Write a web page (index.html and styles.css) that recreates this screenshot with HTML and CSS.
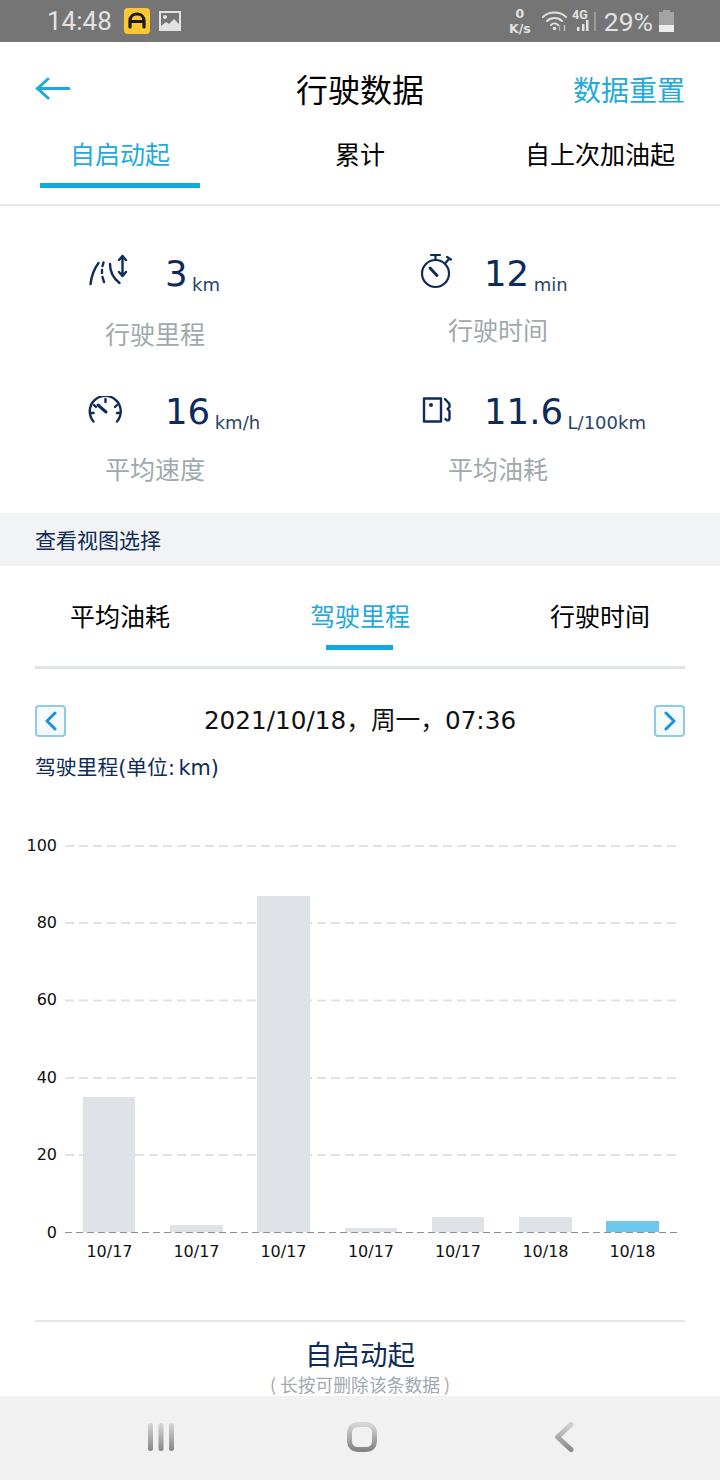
FILE: index.html
```html
<!DOCTYPE html>
<html lang="zh">
<head>
<meta charset="utf-8">
<title>行驶数据</title>
<link rel="stylesheet" href="styles.css">
</head>
<body>
<div class="page">
  <div class="statusbar">
    <div class="status-left">
      <span class="status-time">14:48</span>
      <svg class="app-icon" width="26" height="26" viewBox="0 0 26 26"><rect width="26" height="26" rx="4" fill="#fcc731"/><path d="M6 19V13C6 8.500 9 6 13 6s7 2.500 7 7v6" fill="none" stroke="#1c1a14" stroke-width="3.200" stroke-linecap="round"/><path d="M6 13.500h14" stroke="#1c1a14" stroke-width="3"/></svg>
      <svg class="pic-icon" width="22" height="20" viewBox="0 0 22 20"><path d="M0 0h22v20H0z" fill="#e2e2e2"/><path d="M2 2h18v11l-5-5-5 5-3-2-5 4z" fill="#757575"/><circle cx="6" cy="6" r="2" fill="#e2e2e2"/></svg>
    </div>
    <div class="status-right">
      <span class="speed"><span>0</span><span>K/s</span></span>
      <svg class="wifi" width="27" height="22" viewBox="0 0 27 22"><g fill="none" stroke="#e2e2e2" stroke-width="2" stroke-linecap="round"><path d="M1 7C7 1 18 1 24 7"/><path d="M5 11c4-4 11-4 15 0"/><path d="M9 15c2-2 5-2 7 0"/></g><circle cx="12.500" cy="18.500" r="1.800" fill="#e2e2e2"/><path d="M17.500 15v6" stroke="#a8a8a8" stroke-width="1.500"/><path d="M22.500 15v6" stroke="#bdbdbd" stroke-width="1.500"/></svg>
      <svg class="signal" width="24" height="26" viewBox="0 0 24 26"><text class="net-text" x="0" y="11">4G</text><path d="M5 19h2.500v4H5zM10 16h2.500v7H10zM14 12h2.500v11H14z" fill="#e2e2e2"/><path d="M22 4h2v19h-2z" fill="#9a9a9a"/></svg>
      <span class="status-batt">29%</span>
      <svg width="15" height="22" viewBox="0 0 15 22"><path d="M4 0h7v2h4v20H0V2h4z" fill="#a4a4a4"/><path d="M0 15h15v7H0z" fill="#ececec"/></svg>
    </div>
  </div>

  <header class="appbar">
    <svg class="back" width="36" height="24" viewBox="0 0 36 24"><path d="M2 11.500h32M13 2 2.500 11.500 13 21" fill="none" stroke="#1da9e0" stroke-width="3" stroke-linecap="round" stroke-linejoin="round"/></svg>
    <h1 class="title">行驶数据</h1>
    <a class="reset">数据重置</a>
  </header>

  <nav class="tabs">
    <div class="tab tab-active">自启动起</div>
    <div class="tab">累计</div>
    <div class="tab">自上次加油起</div>
  </nav>

  <section class="stats">
    <div class="stat stat-dist">
      <div class="stat-main">
        <svg class="stat-icon" width="40" height="34" viewBox="0 0 40 34"><g fill="none" stroke="#0f2b58" stroke-width="2.400" stroke-linecap="round" stroke-linejoin="round"><path d="M2.500 30C3.500 22 6 15 10.500 9"/><path d="M15.500 8.500 14.500 12M14 16v3M14.500 23l1.500 5"/><path d="M22 10c0 8 3 14 9.500 19"/><path d="M34.500 2v20M31 6l3.500-4L38 6M31 18l3.500 4 3.500-4"/></g></svg>
        <span class="num">3</span><span class="unit">km</span>
      </div>
      <div class="stat-label">行驶里程</div>
    </div>
    <div class="stat stat-time">
      <div class="stat-main">
        <svg class="stat-icon" width="34" height="36" viewBox="0 0 34 36"><g fill="none" stroke="#0f2b58" stroke-width="2.200" stroke-linecap="round"><circle cx="15.500" cy="20.500" r="13.500"/><path d="M15.500 7V2M11 2h9M25.500 10l3.500-4M27 4l4 2.500"/><path d="M10 15l7 7.500" stroke-width="3"/></g></svg>
        <span class="num">12</span><span class="unit">min</span>
      </div>
      <div class="stat-label">行驶时间</div>
    </div>
    <div class="stat stat-speed">
      <div class="stat-main">
        <svg class="stat-icon" width="36" height="28" viewBox="0 0 36 28"><g fill="none" stroke="#0f2b58" stroke-width="2.400" stroke-linecap="round"><path d="M5.500 25.500A15.500 15.500 0 1 1 29 25.500"/><path d="M17.500 3v3M6 9l2 2M29 9l-2 2M2.500 17h3M29 17h3"/><path d="M10 9l8 7" stroke-width="3"/></g></svg>
        <span class="num">16</span><span class="unit">km/h</span>
      </div>
      <div class="stat-label">平均速度</div>
    </div>
    <div class="stat stat-fuel">
      <div class="stat-main">
        <svg class="stat-icon" width="32" height="28" viewBox="0 0 32 28"><g fill="none" stroke="#0f2b58" stroke-width="2.400" stroke-linecap="round" stroke-linejoin="round"><path d="M4 25.500V2.500h17v23z"/><path d="M25 3l4.500 5v3l-2 2 2 2v7c0 3-3 3-4 1"/></g><circle cx="11" cy="9" r="2" fill="#0f2b58"/></svg>
        <span class="num">11.6</span><span class="unit">L/100km</span>
      </div>
      <div class="stat-label">平均油耗</div>
    </div>
  </section>

  <div class="band">查看视图选择</div>

  <nav class="subtabs">
    <div class="subtab">平均油耗</div>
    <div class="subtab subtab-active">驾驶里程</div>
    <div class="subtab">行驶时间</div>
  </nav>
  <div class="rule-thick"></div>

  <div class="date-row">
    <span class="pager"><svg width="14" height="20" viewBox="0 0 14 20"><path d="M11 2 3 10l8 8" fill="none" stroke="#1f90db" stroke-width="3" stroke-linecap="round" stroke-linejoin="round"/></svg></span>
    <span class="date">2021/10/18，周一，07:36</span>
    <span class="pager"><svg width="14" height="20" viewBox="0 0 14 20"><path d="m3 2 8 8-8 8" fill="none" stroke="#1f90db" stroke-width="3" stroke-linecap="round" stroke-linejoin="round"/></svg></span>
  </div>
  <div class="chart-title">驾驶里程(单位: km)</div>

  <svg class="chart" width="720" height="480" viewBox="0 800 720 480">
    <g class="grid">
      <line x1="65" x2="677" y1="846" y2="846"/>
      <line x1="65" x2="677" y1="923" y2="923"/>
      <line x1="65" x2="677" y1="1000.500" y2="1000.500"/>
      <line x1="65" x2="677" y1="1078" y2="1078"/>
      <line x1="65" x2="677" y1="1155" y2="1155"/>
    </g>
    <g class="ylabels">
      <text x="57" y="851">100</text>
      <text x="57" y="928">80</text>
      <text x="57" y="1005">60</text>
      <text x="57" y="1083">40</text>
      <text x="57" y="1160">20</text>
      <text x="57" y="1238">0</text>
    </g>
    <g class="bars">
      <rect x="83" y="1097" width="52" height="135"/>
      <rect x="170" y="1225" width="53" height="7"/>
      <rect x="257" y="896" width="53" height="336"/>
      <rect x="345" y="1228" width="52" height="4"/>
      <rect x="432" y="1217" width="52" height="15"/>
      <rect x="519" y="1217" width="53" height="15"/>
      <rect class="bar-now" x="606" y="1221" width="53" height="11"/>
    </g>
    <line class="axis" x1="65" x2="677" y1="1232.500" y2="1232.500"/>
    <g class="xlabels">
      <text x="109.500" y="1257">10/17</text>
      <text x="196.500" y="1257">10/17</text>
      <text x="283.500" y="1257">10/17</text>
      <text x="371" y="1257">10/17</text>
      <text x="458" y="1257">10/17</text>
      <text x="545.500" y="1257">10/18</text>
      <text x="632.500" y="1257">10/18</text>
    </g>
  </svg>

  <div class="rule-thin"></div>
  <div class="list-title">自启动起</div>
  <div class="list-hint">( 长按可删除该条数据 )</div>

  <footer class="navbar">
    <svg class="nav-recent" width="30" height="30" viewBox="0 0 30 30"><defs><linearGradient id="gn" x1="0" x2="0" y1="0" y2="1"><stop offset="0" stop-color="#d8d8d8"/><stop offset="1" stop-color="#868686"/></linearGradient></defs><rect x="3" y="1" width="5" height="28" rx="2.500" fill="url(#gn)"/><rect x="13.500" y="1" width="5" height="28" rx="2.500" fill="url(#gn)"/><rect x="24" y="1" width="5" height="28" rx="2.500" fill="url(#gn)"/></svg>
    <svg class="nav-home" width="32" height="32" viewBox="0 0 32 32"><defs><linearGradient id="gh" x1="0" x2="0" y1="0" y2="1"><stop offset="0" stop-color="#d6d6d6"/><stop offset="1" stop-color="#858585"/></linearGradient></defs><rect x="3.500" y="3.500" width="25" height="25" rx="8" fill="none" stroke="url(#gh)" stroke-width="5"/></svg>
    <svg class="nav-back" width="22" height="32" viewBox="0 0 22 32"><defs><linearGradient id="gb" x1="0" x2="0" y1="0" y2="1"><stop offset="0" stop-color="#d0d0d0"/><stop offset="1" stop-color="#8a8a8a"/></linearGradient></defs><path d="M18 3.500 4.500 16 18 28.500" fill="none" stroke="url(#gb)" stroke-width="5" stroke-linecap="round" stroke-linejoin="round"/></svg>
  </footer>
</div>
</body>
</html>
```
FILE: styles.css
```css
* { box-sizing: border-box; }
html, body { margin: 0; padding: 0; background: #fff; }
body { font-family: "DejaVu Sans", "Noto Sans CJK SC", sans-serif; color: #000; }
.page { width: 720px; height: 1480px; overflow: hidden; display: flex; flex-direction: column; }

.statusbar { height: 42px; background: #757575; display: flex; justify-content: space-between; align-items: center; padding: 0 46px 0 47px; color: #e2e2e2; font-family: Roboto, sans-serif; font-size: 26px; flex: none; }
.status-left, .status-right { display: flex; align-items: center; }
.status-time { width: 77px; }
.app-icon { margin-right: 9px; }
.status-right svg { flex: none; }
.speed { display: flex; flex-direction: column; align-items: center; font-family: "DejaVu Sans", sans-serif; font-size: 12.500px; font-weight: 700; line-height: 15px; margin-right: 11px; }
.wifi { margin-right: 3px; }
.signal { margin-right: 8px; }
.net-text { font: 700 12.500px Roboto, sans-serif; fill: #e2e2e2; }
.status-batt { margin-right: 6px; font-size: 26.500px; }

.appbar { height: 96px; flex: none; display: flex; align-items: center; justify-content: center; position: relative; padding-bottom: 4px; }
.back { position: absolute; left: 35px; top: 35px; }
.title { font-size: 32px; font-weight: 400; margin: 0; line-height: 44px; font-family: "Noto Sans CJK SC", sans-serif; }
.reset { position: absolute; right: 35px; top: 27px; font-size: 28px; line-height: 40px; color: #1fa9de; font-family: "Noto Sans CJK SC", sans-serif; }

.tabs { height: 68px; flex: none; display: flex; align-items: flex-start; border-bottom: 2px solid #e6e8ea; }
.tab { width: 240px; text-align: center; font-size: 25px; line-height: 30px; height: 50px; font-family: "Noto Sans CJK SC", sans-serif; }
.tab-active { color: #1fa9de; margin-left: 40px; width: 160px; margin-right: 40px; border-bottom: 5px solid #12a9e2; }

.stats { height: 307px; flex: none; display: grid; grid-template-columns: 360px 360px; grid-template-rows: 138px 1fr; padding-top: 48px; }
.stat-main { display: flex; align-items: center; height: 40px; }
.stat-icon { flex: none; }
.num { font-size: 35.500px; line-height: 40px; color: #0c2a5a; }
.unit { font-size: 18px; color: #2c4468; margin-left: 4.500px; align-self: flex-end; line-height: 30px; margin-bottom: -6px; }
.stat-label { font-size: 25px; line-height: 34px; color: #a0a9ad; font-family: "Noto Sans CJK SC", sans-serif; }
.stat-dist, .stat-speed { padding-left: 88px; }
.stat-dist .stat-icon { margin-right: 37px; margin-top: -6px; }
.stat-speed .stat-icon { margin-right: 41px; margin-top: -4px; }
.stat-time, .stat-fuel { padding-left: 60px; }
.stat-time .stat-icon { margin-right: 30px; margin-top: -6px; }
.stat-fuel .stat-icon { margin-right: 32px; margin-top: -4px; }
.stat-dist .stat-label, .stat-speed .stat-label { margin-left: 17px; }
.stat-time .stat-label, .stat-fuel .stat-label { margin-left: 28px; }
.stat-dist .stat-label { margin-top: 22px; }
.stat-time .stat-label { margin-top: 18px; }
.stat-speed .stat-label, .stat-fuel .stat-label { margin-top: 19px; }

.band { height: 53px; flex: none; background: #f1f3f5; padding-left: 35px; font-size: 21px; line-height: 53px; color: #0f2b58; font-family: "Noto Sans CJK SC", sans-serif; }

.subtabs { height: 84px; flex: none; display: flex; }
.subtab { width: 240px; text-align: center; font-size: 25px; line-height: 34px; padding-top: 32px; font-family: "Noto Sans CJK SC", sans-serif; position: relative; }
.subtab-active { color: #1fa9de; }
.subtab-active::after { content: ""; position: absolute; left: 86px; width: 67px; bottom: 0; height: 5px; background: #12a9e2; }
.rule-thick { height: 3px; flex: none; margin: 16px 35px 0; background: #dfe4e7; }

.date-row { display: flex; justify-content: space-between; align-items: center; margin: 36px 35px 0; height: 32px; flex: none; }
.pager { width: 31px; height: 32px; border: 2px solid #8fc9ec; border-radius: 4px; background: #f4fafe; display: flex; align-items: center; justify-content: center; }
.date { font-size: 24.700px; line-height: 32px; color: #111; }
.chart-title { font-size: 20.800px; line-height: 30px; margin: 16px 0 0 35px; height: 30px; flex: none; color: #0f2b58; word-spacing: -3px; }

.chart { display: block; flex: none; margin-top: 17px; }
.chart text { font-family: "DejaVu Sans", sans-serif; font-size: 16px; fill: #111; }
.grid line { stroke: #dfe3e6; stroke-width: 2; stroke-dasharray: 9 5; }
.bars rect { fill: #dfe3e7; }
.bars .bar-now { fill: #6dc8ec; }
.axis { stroke: #8a8f92; stroke-width: 1; stroke-dasharray: 7 4; }
.ylabels text { text-anchor: end; }
.xlabels text { text-anchor: middle; }

.rule-thin { height: 2px; flex: none; margin: 40px 35px 0; background: #e3e6e8; }
.list-title { text-align: center; font-size: 27.500px; line-height: 40px; margin-top: 11px; height: 40px; flex: none; color: #0f2b58; font-family: "Noto Sans CJK SC", sans-serif; }
.list-hint { text-align: center; font-size: 17.800px; line-height: 23px; height: 23px; flex: none; color: #a0a9ad; font-family: "Noto Sans CJK SC", sans-serif; }

.navbar { height: 84px; flex: none; background: #f1f1f1; display: flex; align-items: center; padding: 0 0 2px 145px; }
.nav-home { margin-left: 171px; }
.nav-back { margin-left: 175px; }
```
